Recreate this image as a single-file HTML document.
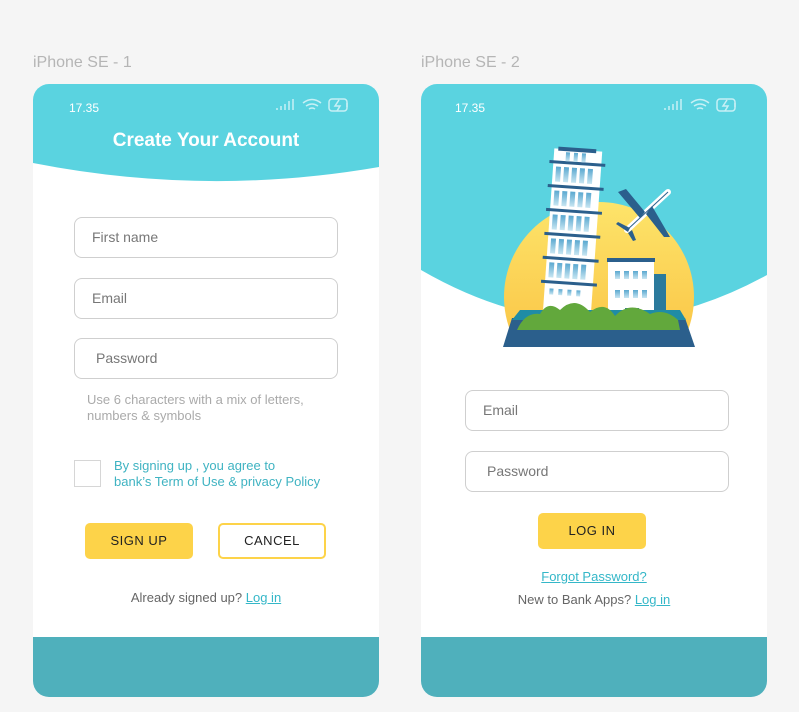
<!DOCTYPE html>
<html><head><style>
body{margin:0;width:799px;height:712px;background:#f5f5f5;position:relative;overflow:hidden;font-family:"Liberation Sans",sans-serif}
.a{position:absolute}
.lbl{color:#b5b5b5;font-size:16px;top:54px}
.ph{position:absolute;top:84px;width:346px;height:613px;background:#fff;border-radius:16px;overflow:hidden}
.inp{position:absolute;height:41px;border:1px solid #cfcfcf;border-radius:8px;box-sizing:border-box;color:#777;font-size:14px;line-height:39px;background:#fff}
.btn{position:absolute;height:36px;border-radius:5px;box-sizing:border-box;font-size:13px;text-align:center;line-height:36px;color:#222;letter-spacing:.5px}
.bar{position:absolute;left:0;bottom:0;width:100%;height:60px;background:#4fb0bc}
.time{position:absolute;top:17px;color:#fff;font-size:12px}
.lk{color:#34b7c8;text-decoration:underline}
</style></head><body>
<div class="a lbl" style="left:33px">iPhone SE - 1</div>
<div class="a lbl" style="left:421px">iPhone SE - 2</div>

<div class="ph" style="left:33px">
 <svg class="a" style="left:0;top:0" width="346" height="110"><path d="M0 0H346V83Q173 113 0 79Z" fill="#5ad3e0"/></svg>
 <div class="time" style="left:36px">17.35</div>
 <svg class="a" style="left:242px;top:12px" width="104" height="20" fill="none" stroke="#c8f0f5" stroke-width="1.5">
  <path d="M2 14v-2M6 14v-4M10 14v-6M14 14v-9M18 14v-11"/>
  <path d="M28 7q9-7 18 0M31 10q6-4 12 0M34 13q3-2 6 0"/>
  <rect x="54" y="3" width="18" height="12" rx="3"/><path d="M72 7v4M64 4l-4 6h5l-3 5"/>
 </svg>
 <div class="a" style="left:0;width:346px;top:46px;text-align:center;color:#fff;font-weight:bold;font-size:19px">Create Your Account</div>
 <div class="inp" style="left:41px;top:133px;width:264px;padding-left:17px">First name</div>
 <div class="inp" style="left:41px;top:194px;width:264px;padding-left:17px">Email</div>
 <div class="inp" style="left:41px;top:254px;width:264px;padding-left:21px">Password</div>
 <div class="a" style="left:54px;top:308px;color:#aaa;font-size:13px;line-height:16px">Use 6 characters with a mix of letters,<br>numbers &amp; symbols</div>
 <div class="a" style="left:41px;top:376px;width:27px;height:27px;border:1px solid #d6d6d6;box-sizing:border-box"></div>
 <div class="a" style="left:81px;top:374px;color:#3fb3c2;font-size:13px;line-height:16px">By signing up , you agree to<br>bank’s Term of Use &amp; privacy Policy</div>
 <div class="btn" style="left:52px;top:439px;width:108px;background:#fdd349">SIGN UP</div>
 <div class="btn" style="left:185px;top:439px;width:108px;border:2px solid #fdd349;line-height:32px">CANCEL</div>
 <div class="a" style="left:0;width:346px;top:506px;text-align:center;color:#666;font-size:13px">Already signed up? <span class="lk">Log in</span></div>
 <div class="bar"></div>
</div>

<div class="ph" style="left:421px">
 <svg class="a" style="left:-421px;top:-84px" width="799" height="712">
  <path d="M421 84H767V275Q594 370 421 270Z" fill="#5ad3e0"/>
  <defs><linearGradient id="s" x1="0" y1="0" x2="0" y2="1"><stop offset="0" stop-color="#fde46a"/><stop offset="1" stop-color="#f9bb3a"/></linearGradient>
  <linearGradient id="w" x1="0" y1="0" x2="0" y2="1"><stop offset="0" stop-color="#5aa8d0"/><stop offset="1" stop-color="#c8e6f2"/></linearGradient>
  <clipPath id="c"><rect x="400" y="150" width="400" height="185"/></clipPath></defs>
  <circle cx="599" cy="297" r="95" fill="url(#s)" clip-path="url(#c)"/>
  <g transform="rotate(4 575 240)">
   <rect x="548" y="150" width="48" height="180" fill="#fff"/>
   <rect x="552" y="148" width="38" height="4" fill="#2b5f8c"/>
   <g fill="#2b5f8c"><rect x="544" y="162" width="56" height="3"/><rect x="544" y="186" width="56" height="3"/><rect x="544" y="210" width="56" height="3"/><rect x="544" y="234" width="56" height="3"/><rect x="544" y="258" width="56" height="3"/><rect x="544" y="282" width="56" height="3"/></g>
   <g fill="url(#w)">
    <rect x="560" y="153" width="4" height="9"/><rect x="568" y="153" width="4" height="9"/><rect x="576" y="153" width="4" height="9"/>
    <rect x="551" y="168" width="5" height="15"/><rect x="559" y="168" width="5" height="15"/><rect x="567" y="168" width="5" height="15"/><rect x="575" y="168" width="5" height="15"/><rect x="583" y="168" width="5" height="15"/>
    <rect x="551" y="192" width="5" height="15"/><rect x="559" y="192" width="5" height="15"/><rect x="567" y="192" width="5" height="15"/><rect x="575" y="192" width="5" height="15"/><rect x="583" y="192" width="5" height="15"/>
    <rect x="551" y="216" width="5" height="15"/><rect x="559" y="216" width="5" height="15"/><rect x="567" y="216" width="5" height="15"/><rect x="575" y="216" width="5" height="15"/><rect x="583" y="216" width="5" height="15"/>
    <rect x="551" y="240" width="5" height="15"/><rect x="559" y="240" width="5" height="15"/><rect x="567" y="240" width="5" height="15"/><rect x="575" y="240" width="5" height="15"/><rect x="583" y="240" width="5" height="15"/>
    <rect x="551" y="264" width="5" height="15"/><rect x="559" y="264" width="5" height="15"/><rect x="567" y="264" width="5" height="15"/><rect x="575" y="264" width="5" height="15"/><rect x="583" y="264" width="5" height="15"/>
    <rect x="553" y="290" width="4" height="6"/><rect x="562" y="290" width="4" height="6"/><rect x="571" y="290" width="4" height="6"/><rect x="580" y="290" width="4" height="6"/>
   </g>
  </g>
  <rect x="608" y="262" width="46" height="68" fill="#fff"/>
  <rect x="607" y="258" width="48" height="4" fill="#2b5f8c"/>
  <rect x="654" y="274" width="12" height="50" fill="#2b7a9c"/>
  <g fill="url(#w)"><rect x="615" y="271" width="5" height="8"/><rect x="624" y="271" width="5" height="8"/><rect x="633" y="271" width="5" height="8"/><rect x="642" y="271" width="5" height="8"/>
  <rect x="615" y="290" width="5" height="8"/><rect x="624" y="290" width="5" height="8"/><rect x="633" y="290" width="5" height="8"/><rect x="642" y="290" width="5" height="8"/></g>
  <rect x="625" y="308" width="14" height="20" fill="#2b7a9c"/>
  <path d="M503 347L512 318H685L695 347Z" fill="#2b5f8c"/>
  <path d="M512 320L520 310H680L686 320Z" fill="#1f8ca6"/>
  <path d="M517 330Q525 312 540 314Q548 300 560 310Q575 295 590 312Q605 300 615 316Q630 300 650 314Q665 308 678 320L680 330Z" fill="#62a83c"/>
  <path d="M627 230L668 192" stroke="#fff" stroke-width="6" stroke-linecap="round"/>
  <path d="M627 230L668 192" stroke="#2b5f8c" stroke-width="1"/>
  <path d="M645 212L626 189L618 192L640 218ZM652 206L670 237L664 237L646 214ZM630 228L618 222L616 224L628 232ZM632 230L636 240L633 241L628 233Z" fill="#2b5f8c"/>
 </svg>
 <div class="time" style="left:34px">17.35</div>
 <svg class="a" style="left:242px;top:12px" width="104" height="20" fill="none" stroke="#c8f0f5" stroke-width="1.5">
  <path d="M2 14v-2M6 14v-4M10 14v-6M14 14v-9M18 14v-11"/>
  <path d="M28 7q9-7 18 0M31 10q6-4 12 0M34 13q3-2 6 0"/>
  <rect x="54" y="3" width="18" height="12" rx="3"/><path d="M72 7v4M64 4l-4 6h5l-3 5"/>
 </svg>
 <div class="inp" style="left:44px;top:306px;width:264px;padding-left:17px">Email</div>
 <div class="inp" style="left:44px;top:367px;width:264px;padding-left:21px">Password</div>
 <div class="btn" style="left:117px;top:429px;width:108px;background:#fdd349;height:36px">LOG IN</div>
 <div class="a" style="left:0;width:346px;top:485px;text-align:center;font-size:13px"><span class="lk">Forgot Password?</span></div>
 <div class="a" style="left:0;width:346px;top:508px;text-align:center;color:#666;font-size:13px">New to Bank Apps? <span class="lk">Log in</span></div>
 <div class="bar"></div>
</div>
</body></html>
